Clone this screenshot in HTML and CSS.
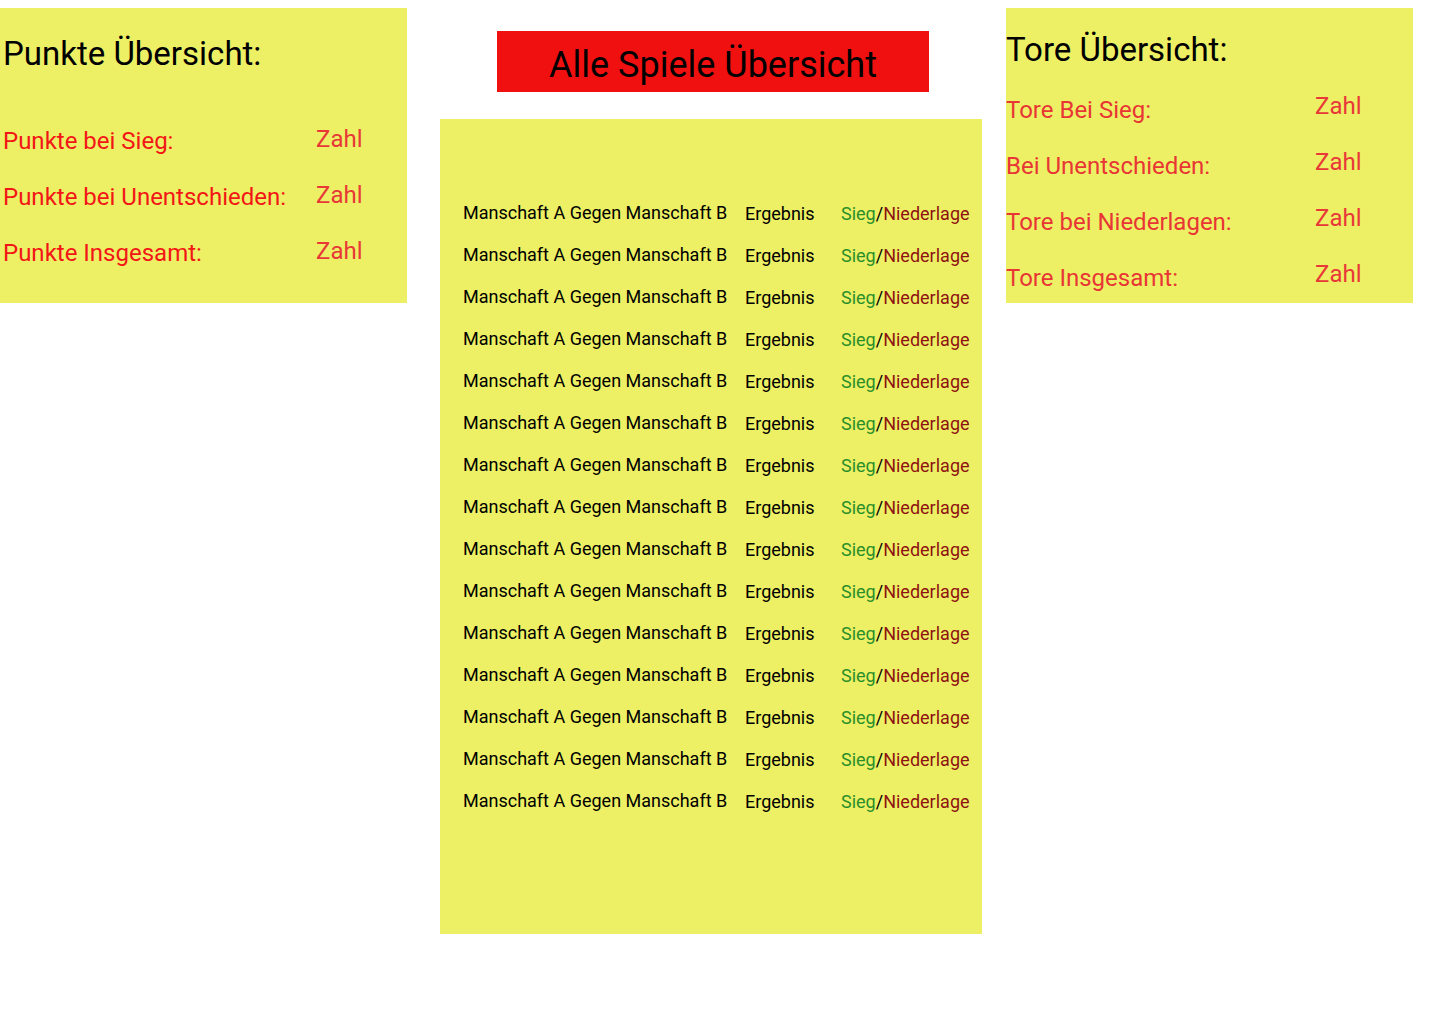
FILE: index.html
```html
<!DOCTYPE html>
<html lang="de">
<head>
<meta charset="utf-8">
<title>Übersicht</title>
<link rel="stylesheet" href="styles.css">
</head>
<body>
<div class="page">
  <section class="panel panel-left">
    <h2 class="panel-title title-left">Punkte Übersicht:</h2>
    <div class="stat-list stat-list-left">
      <div class="stat"><span class="stat-label">Punkte bei Sieg:</span><span class="stat-value">Zahl</span></div>
      <div class="stat"><span class="stat-label">Punkte bei Unentschieden:</span><span class="stat-value">Zahl</span></div>
      <div class="stat"><span class="stat-label">Punkte Insgesamt:</span><span class="stat-value">Zahl</span></div>
    </div>
  </section>

  <main class="center">
    <h1 class="main-title">Alle Spiele Übersicht</h1>
    <div class="games">
      <div class="game"><span class="match">Manschaft A Gegen Manschaft B</span><span class="result">Ergebnis</span><span class="outcome"><span class="win">Sieg</span>/<span class="loss">Niederlage</span></span></div>
      <div class="game"><span class="match">Manschaft A Gegen Manschaft B</span><span class="result">Ergebnis</span><span class="outcome"><span class="win">Sieg</span>/<span class="loss">Niederlage</span></span></div>
      <div class="game"><span class="match">Manschaft A Gegen Manschaft B</span><span class="result">Ergebnis</span><span class="outcome"><span class="win">Sieg</span>/<span class="loss">Niederlage</span></span></div>
      <div class="game"><span class="match">Manschaft A Gegen Manschaft B</span><span class="result">Ergebnis</span><span class="outcome"><span class="win">Sieg</span>/<span class="loss">Niederlage</span></span></div>
      <div class="game"><span class="match">Manschaft A Gegen Manschaft B</span><span class="result">Ergebnis</span><span class="outcome"><span class="win">Sieg</span>/<span class="loss">Niederlage</span></span></div>
      <div class="game"><span class="match">Manschaft A Gegen Manschaft B</span><span class="result">Ergebnis</span><span class="outcome"><span class="win">Sieg</span>/<span class="loss">Niederlage</span></span></div>
      <div class="game"><span class="match">Manschaft A Gegen Manschaft B</span><span class="result">Ergebnis</span><span class="outcome"><span class="win">Sieg</span>/<span class="loss">Niederlage</span></span></div>
      <div class="game"><span class="match">Manschaft A Gegen Manschaft B</span><span class="result">Ergebnis</span><span class="outcome"><span class="win">Sieg</span>/<span class="loss">Niederlage</span></span></div>
      <div class="game"><span class="match">Manschaft A Gegen Manschaft B</span><span class="result">Ergebnis</span><span class="outcome"><span class="win">Sieg</span>/<span class="loss">Niederlage</span></span></div>
      <div class="game"><span class="match">Manschaft A Gegen Manschaft B</span><span class="result">Ergebnis</span><span class="outcome"><span class="win">Sieg</span>/<span class="loss">Niederlage</span></span></div>
      <div class="game"><span class="match">Manschaft A Gegen Manschaft B</span><span class="result">Ergebnis</span><span class="outcome"><span class="win">Sieg</span>/<span class="loss">Niederlage</span></span></div>
      <div class="game"><span class="match">Manschaft A Gegen Manschaft B</span><span class="result">Ergebnis</span><span class="outcome"><span class="win">Sieg</span>/<span class="loss">Niederlage</span></span></div>
      <div class="game"><span class="match">Manschaft A Gegen Manschaft B</span><span class="result">Ergebnis</span><span class="outcome"><span class="win">Sieg</span>/<span class="loss">Niederlage</span></span></div>
      <div class="game"><span class="match">Manschaft A Gegen Manschaft B</span><span class="result">Ergebnis</span><span class="outcome"><span class="win">Sieg</span>/<span class="loss">Niederlage</span></span></div>
      <div class="game"><span class="match">Manschaft A Gegen Manschaft B</span><span class="result">Ergebnis</span><span class="outcome"><span class="win">Sieg</span>/<span class="loss">Niederlage</span></span></div>
    </div>
  </main>

  <section class="panel panel-right">
    <h2 class="panel-title title-right">Tore Übersicht:</h2>
    <div class="stat-list stat-list-right">
      <div class="stat"><span class="stat-label">Tore Bei Sieg:</span><span class="stat-value">Zahl</span></div>
      <div class="stat"><span class="stat-label">Bei Unentschieden:</span><span class="stat-value">Zahl</span></div>
      <div class="stat"><span class="stat-label">Tore bei Niederlagen:</span><span class="stat-value">Zahl</span></div>
      <div class="stat"><span class="stat-label">Tore Insgesamt:</span><span class="stat-value">Zahl</span></div>
    </div>
  </section>
</div>
</body>
</html>
```

FILE: styles.css
```css
* { box-sizing: border-box; }

html, body {
  margin: 0;
  padding: 0;
  background: #ffffff;
  font-family: Roboto, "Liberation Sans", Arial, sans-serif;
}

.page {
  display: flex;
  align-items: flex-start;
  padding-top: 8px;
}

.panel {
  width: 407px;
  height: 295px;
  background: #edf064;
  flex-shrink: 0;
}

.panel-left { margin-right: 33px; }
.panel-right { margin-left: 24px; }

.panel-title {
  margin: 0;
  font-weight: 400;
  font-size: 33px;
  line-height: 1;
  color: #000;
}

.title-left { padding: 29px 0 0 3px; }
.title-right { padding: 25px 0 0 0; }

.stat-list { display: flex; flex-direction: column; }
.stat-list-left { padding: 59px 0 0 3px; gap: 32px; }
.stat-list-right { padding: 32px 0 0 0; gap: 32px; }

.stat {
  display: flex;
  align-items: flex-start;
  height: 24px;
  font-size: 24px;
  line-height: 24px;
}

.panel-left .stat-label { width: 313px; color: #f21616; }
.panel-right .stat-label { width: 309px; color: #e83535; }

.stat-value {
  color: #e83838;
  position: relative;
  top: -2px;
}

.panel-right .stat-value { top: -4px; }

.center {
  width: 542px;
  flex-shrink: 0;
  display: flex;
  flex-direction: column;
  align-items: center;
}

.main-title {
  margin: 23px 0 0 4px;
  width: 432px;
  height: 61px;
  background: #f01010;
  color: #000;
  font-weight: 400;
  font-size: 36px;
  line-height: 68px;
  text-align: center;
}

.games {
  margin-top: 27px;
  width: 542px;
  height: 815px;
  background: #edf064;
  padding: 83px 0 0 23px;
  display: flex;
  flex-direction: column;
  gap: 21px;
}

.game {
  display: flex;
  font-size: 18px;
  line-height: 21px;
  height: 21px;
  color: #000;
}

.match { width: 282px; }
.result { width: 96px; position: relative; top: 1px; }
.outcome { position: relative; top: 1px; }
.win { color: #2a8f2a; }
.loss { color: #8e1212; }
```
